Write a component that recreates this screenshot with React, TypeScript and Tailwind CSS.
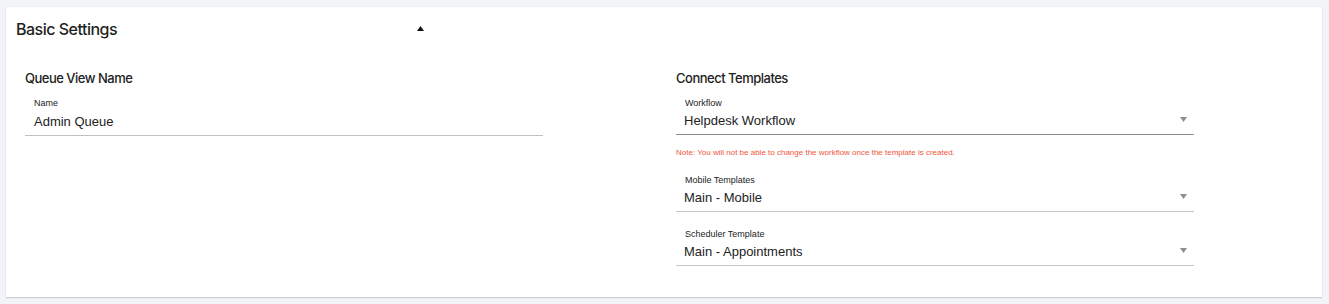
import React from "react";

const ARIAL = { fontFamily: "'Liberation Sans', Arial, sans-serif" };

function Caret() {
  return (
    <svg width="7" height="5" viewBox="0 0 7 5" className="absolute right-[7px] top-[20px]">
      <polygon points="0,0 7,0 3.5,5" fill="#8f8f8f" />
    </svg>
  );
}

function Field({
  label,
  value,
  select,
  dark,
}: {
  label: string;
  value: string;
  select?: boolean;
  dark?: boolean;
}) {
  return (
    <div
      className={`relative w-[518px] pl-[8px] pb-[4px] border-b ${
        dark ? "border-[#8c8c8c]" : "border-[#c8c8c8]"
      }`}
      style={ARIAL}
    >
      <div className="pl-[1px] text-[9px] leading-[12px] text-[#222]">{label}</div>
      <div className="mt-[3px] text-[13px] leading-[18px] text-[#222]">{value}</div>
      {select && <Caret />}
    </div>
  );
}

export default function App() {
  return (
    <div
      className="w-[1329px] h-[304px] bg-[#f3f4f8] pt-[7px] pl-[6px] pr-[7px]"
      style={{ fontFamily: "Inter, 'Noto Sans', sans-serif" }}
    >
      <div className="h-[290px] bg-white shadow-[0_1px_1px_rgba(0,0,0,0.15),0_0_1px_rgba(0,0,0,0.08)]">
        <div className="flex items-center pl-[10px] pt-[12px] h-[32px]">
          <div className="text-[16px] leading-[20px] font-medium text-[#1f1f1f] tracking-[-0.5px]">
            Basic Settings
          </div>
          <svg width="7" height="5" viewBox="0 0 7 5" className="ml-[300px] mt-[-2px]">
            <polygon points="3.5,0 7,5 0,5" fill="#111" />
          </svg>
        </div>
        <div className="flex pl-[19px] mt-[31px]">
          <div className="w-[651px]">
            <div className="text-[13px] leading-[16px] font-medium text-[#222] tracking-[-0.5px]">
              Queue View Name
            </div>
            <div className="mt-[11px]">
              <div
                className="relative w-[518px] pl-[9px] pb-[4px] border-b border-[#c0c0c0]"
                style={ARIAL}
              >
                <div className="text-[9px] leading-[12px] text-[#222]">Name</div>
                <div className="mt-[4px] text-[13px] leading-[18px] text-[#222]">Admin Queue</div>
              </div>
            </div>
          </div>
          <div className="w-[600px]">
            <div className="text-[13px] leading-[16px] font-medium text-[#222] tracking-[-0.5px]">
              Connect Templates
            </div>
            <div className="mt-[11px]">
              <Field label="Workflow" value="Helpdesk Workflow" select dark />
            </div>
            <div className="mt-[13px] text-[8px] leading-[10px] text-[#f0553c]" style={ARIAL}>
              Note: You will not be able to change the workflow once the template is created.
            </div>
            <div className="mt-[16px]">
              <Field label="Mobile Templates" value="Main - Mobile" select />
            </div>
            <div className="mt-[16px]">
              <Field label="Scheduler Template" value="Main - Appointments" select />
            </div>
          </div>
        </div>
      </div>
    </div>
  );
}
